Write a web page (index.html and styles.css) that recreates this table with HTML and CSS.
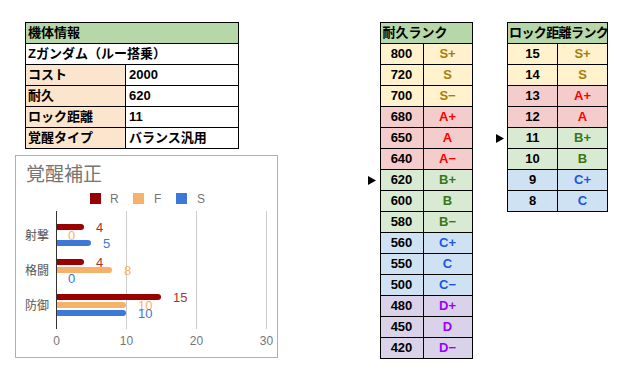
FILE: index.html
```html
<!DOCTYPE html>
<html lang="ja">
<head>
<meta charset="utf-8">
<link rel="stylesheet" href="styles.css">
</head>
<body>
<div class="page">
  <div class="left">
    <table class="sheet info">
      <colgroup><col class="c-label"><col class="c-value"></colgroup>
      <tr><td colspan="2" class="hdr">機体情報</td></tr>
      <tr><td colspan="2" class="plain">Zガンダム（ルー搭乗）</td></tr>
      <tr><td class="lbl">コスト</td><td class="val">2000</td></tr>
      <tr><td class="lbl">耐久</td><td class="val">620</td></tr>
      <tr><td class="lbl">ロック距離</td><td class="val">11</td></tr>
      <tr><td class="lbl">覚醒タイプ</td><td class="val">バランス汎用</td></tr>
    </table>
    <div class="chart">
      <svg class="chart-svg" width="261" height="201" viewBox="0 0 261 201">
        <text x="10" y="25" class="ttl">覚醒補正</text>
        <rect x="74" y="37" width="11" height="11" fill="#990000"/>
        <text x="94" y="46.5" class="lgd">R</text>
        <rect x="117" y="37" width="11" height="11" fill="#f6b26b"/>
        <text x="138" y="46.5" class="lgd">F</text>
        <rect x="160" y="37" width="11" height="11" fill="#3c78d8"/>
        <text x="181" y="46.5" class="lgd">S</text>

        <line x1="110.5" y1="55" x2="110.5" y2="173" class="grid"/>
        <line x1="180.5" y1="55" x2="180.5" y2="173" class="grid"/>
        <line x1="250.5" y1="55" x2="250.5" y2="173" class="grid"/>

        <path d="M40 68 h25 a3 3 0 0 1 0 6 h-25 z" fill="#990000"/>
        <path d="M40 84 h32 a3 3 0 0 1 0 6 h-32 z" fill="#3c78d8"/>
        <path d="M40 103 h25 a3 3 0 0 1 0 6 h-25 z" fill="#990000"/>
        <path d="M40 111 h53 a3 3 0 0 1 0 6 h-53 z" fill="#f6b26b"/>
        <path d="M40 138 h102 a3 3 0 0 1 0 6 h-102 z" fill="#990000"/>
        <path d="M40 146 h67 a3 3 0 0 1 0 6 h-67 z" fill="#f6b26b"/>
        <path d="M40 154 h67 a3 3 0 0 1 0 6 h-67 z" fill="#3c78d8"/>

        <line x1="40.5" y1="55" x2="40.5" y2="173" class="axis"/>

        <text x="80" y="75.5" class="v vr">4</text>
        <text x="52" y="83.5" class="v vf">0</text>
        <text x="87" y="91.5" class="v vs">5</text>
        <text x="80" y="110.5" class="v vr">4</text>
        <text x="108" y="118.5" class="v vf">8</text>
        <text x="52" y="126.5" class="v vs">0</text>
        <text x="157" y="145.5" class="v vr">15</text>
        <text x="122" y="153.5" class="v vf">10</text>
        <text x="122" y="161.5" class="v vs">10</text>

        <text x="33" y="83.5" class="cat">射撃</text>
        <text x="33" y="118.5" class="cat">格闘</text>
        <text x="33" y="153.5" class="cat">防御</text>

        <text x="40.5" y="189" class="tick">0</text>
        <text x="110.5" y="189" class="tick">10</text>
        <text x="180.5" y="189" class="tick">20</text>
        <text x="250.5" y="189" class="tick">30</text>
      </svg>
    </div>
  </div>

  <table class="sheet rank hp">
    <colgroup><col class="c-arrow"><col class="c-num"><col class="c-rank"></colgroup>
    <tr><td class="arr"></td><td colspan="2" class="hdr">耐久ランク</td></tr>
    <tr class="s"><td class="arr"></td><td class="num">800</td><td class="rk">S+</td></tr>
    <tr class="s"><td class="arr"></td><td class="num">720</td><td class="rk">S</td></tr>
    <tr class="s"><td class="arr"></td><td class="num">700</td><td class="rk">S−</td></tr>
    <tr class="a"><td class="arr"></td><td class="num">680</td><td class="rk">A+</td></tr>
    <tr class="a"><td class="arr"></td><td class="num">650</td><td class="rk">A</td></tr>
    <tr class="a"><td class="arr"></td><td class="num">640</td><td class="rk">A−</td></tr>
    <tr class="b"><td class="arr"><svg class="tri" width="8" height="9" viewBox="0 0 8 9"><polygon points="0,0 8,4.5 0,9"/></svg></td><td class="num">620</td><td class="rk">B+</td></tr>
    <tr class="b"><td class="arr"></td><td class="num">600</td><td class="rk">B</td></tr>
    <tr class="b"><td class="arr"></td><td class="num">580</td><td class="rk">B−</td></tr>
    <tr class="c"><td class="arr"></td><td class="num">560</td><td class="rk">C+</td></tr>
    <tr class="c"><td class="arr"></td><td class="num">550</td><td class="rk">C</td></tr>
    <tr class="c"><td class="arr"></td><td class="num">500</td><td class="rk">C−</td></tr>
    <tr class="d"><td class="arr"></td><td class="num">480</td><td class="rk">D+</td></tr>
    <tr class="d"><td class="arr"></td><td class="num">450</td><td class="rk">D</td></tr>
    <tr class="d"><td class="arr"></td><td class="num">420</td><td class="rk">D−</td></tr>
  </table>

  <table class="sheet rank lock">
    <colgroup><col class="c-arrow"><col class="c-num2"><col class="c-rank2"></colgroup>
    <tr><td class="arr"></td><td colspan="2" class="hdr">ロック距離ランク</td></tr>
    <tr class="s"><td class="arr"></td><td class="num">15</td><td class="rk">S+</td></tr>
    <tr class="s"><td class="arr"></td><td class="num">14</td><td class="rk">S</td></tr>
    <tr class="a"><td class="arr"></td><td class="num">13</td><td class="rk">A+</td></tr>
    <tr class="a"><td class="arr"></td><td class="num">12</td><td class="rk">A</td></tr>
    <tr class="b"><td class="arr"><svg class="tri" width="8" height="9" viewBox="0 0 8 9"><polygon points="0,0 8,4.5 0,9"/></svg></td><td class="num">11</td><td class="rk">B+</td></tr>
    <tr class="b"><td class="arr"></td><td class="num">10</td><td class="rk">B</td></tr>
    <tr class="c"><td class="arr"></td><td class="num">9</td><td class="rk">C+</td></tr>
    <tr class="c"><td class="arr"></td><td class="num">8</td><td class="rk">C</td></tr>
  </table>
</div>
</body>
</html>
```

FILE: styles.css
```css
html, body {
  margin: 0;
  padding: 0;
  background: #ffffff;
}

.page {
  display: flex;
  align-items: flex-start;
  padding-top: 22px;
  font-family: "Liberation Sans", "Noto Sans CJK JP", sans-serif;
}

.left {
  margin-left: 15px;
  width: 263px;
  display: flex;
  flex-direction: column;
}

.sheet {
  border-collapse: collapse;
  table-layout: fixed;
  font-size: 13px;
  font-weight: bold;
  color: #000;
}

.sheet td {
  border: 1px solid #000;
  padding: 0;
  height: 20px;
  line-height: 20px;
  white-space: nowrap;
  overflow: hidden;
}

.info {
  margin-left: 10px;
  width: 213px;
}

.c-label { width: 100px; }
.c-value { width: 113px; }

.hdr {
  background: #b6d7a8;
  padding-left: 2px !important;
  text-align: left;
}

.plain {
  background: #fff;
  padding-left: 2px !important;
}

.lbl {
  background: #fce5cd;
  padding-left: 2px !important;
}

.val {
  background: #fff;
  padding-left: 3px !important;
}

.chart {
  margin-top: 6px;
  width: 261px;
  height: 201px;
  border: 1px solid #b0b0b0;
}

.chart-svg {
  display: block;
}

.ttl {
  font-family: "Noto Sans CJK JP", sans-serif;
  font-size: 19px;
  fill: #757575;
}

.lgd {
  font-family: "Liberation Sans", sans-serif;
  font-size: 12px;
  fill: #757575;
}

.grid {
  stroke: #cccccc;
  stroke-width: 1;
}

.axis {
  stroke: #333333;
  stroke-width: 1;
}

.v {
  font-family: "Liberation Sans", sans-serif;
  font-size: 13px;
}
.vr { fill: #a8322a; }
.vf { fill: #f6b26b; }
.vs { fill: #3c78d8; }

.cat {
  font-family: "Noto Sans CJK JP", sans-serif;
  font-size: 12px;
  fill: #555555;
  text-anchor: end;
}

.tick {
  font-family: "Liberation Sans", sans-serif;
  font-size: 12px;
  fill: #757575;
  text-anchor: middle;
}

.rank.hp {
  margin-left: 88px;
  width: 106px;
}

.rank.lock {
  margin-left: 21px;
  width: 114px;
}

.c-arrow { width: 14px; }
.c-num { width: 43px; }
.c-rank { width: 49px; }
.c-num2 { width: 50px; }
.c-rank2 { width: 50px; }

.sheet td.arr {
  border: none;
  background: transparent;
  text-align: left;
  vertical-align: middle;
  padding-left: 2px;
}

.tri {
  display: block;
  fill: #000;
}

.num { text-align: center; }
.rk { text-align: center; }

.lock .hdr {
  padding-left: 1px !important;
  letter-spacing: -0.6px;
}

.s td.num, .s td.rk { background: #fff2cc; }
.a td.num, .a td.rk { background: #f4cccc; }
.b td.num, .b td.rk { background: #d9ead3; }
.c td.num, .c td.rk { background: #cfe2f3; }
.d td.num, .d td.rk { background: #d9d2e9; }

.s .rk { color: #a67d0c; }
.a .rk { color: #ff0000; }
.b .rk { color: #38761d; }
.c .rk { color: #1c56e0; }
.d .rk { color: #9900ff; }
```
